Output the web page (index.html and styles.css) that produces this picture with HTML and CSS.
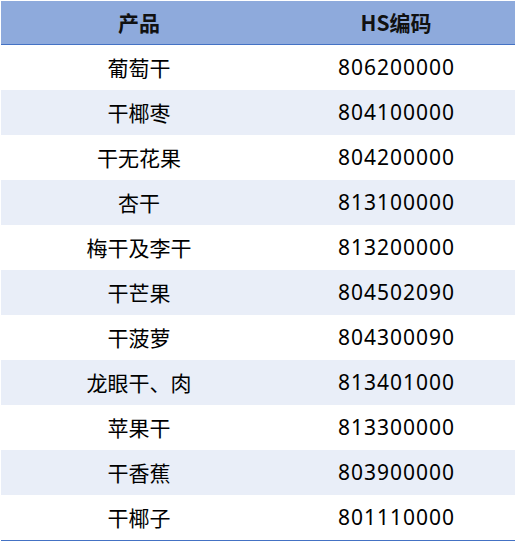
FILE: index.html
```html
<!DOCTYPE html>
<html lang="zh">
<head>
<meta charset="utf-8">
<link rel="stylesheet" href="styles.css">
</head>
<body>
<table class="hs">
  <thead>
    <tr><th class="c1">产品</th><th class="c2">HS编码</th></tr>
  </thead>
  <tbody>
    <tr><td>葡萄干</td><td class="num">806200000</td></tr>
    <tr class="alt"><td>干椰枣</td><td class="num">804100000</td></tr>
    <tr><td>干无花果</td><td class="num">804200000</td></tr>
    <tr class="alt"><td>杏干</td><td class="num">813100000</td></tr>
    <tr><td>梅干及李干</td><td class="num">813200000</td></tr>
    <tr class="alt"><td>干芒果</td><td class="num">804502090</td></tr>
    <tr><td>干菠萝</td><td class="num">804300090</td></tr>
    <tr class="alt"><td>龙眼干、肉</td><td class="num">813401000</td></tr>
    <tr><td>苹果干</td><td class="num">813300000</td></tr>
    <tr class="alt"><td>干香蕉</td><td class="num">803900000</td></tr>
    <tr><td>干椰子</td><td class="num">801110000</td></tr>
  </tbody>
</table>
</body>
</html>
```
FILE: styles.css
```css
html, body {
  margin: 0;
  padding: 0;
  background: #ffffff;
}
body {
  padding: 1px 0 0 1px;
  font-family: "Noto Sans CJK SC", "Noto Sans", sans-serif;
}
.hs {
  border-collapse: collapse;
  width: 514px;
  table-layout: fixed;
  border-bottom: 1px solid #4472c4;
}
.hs th, .hs td {
  padding: 0;
  text-align: center;
  vertical-align: middle;
  font-size: 21px;
  color: #000;
  line-height: 1;
}
.hs th {
  background: #8eaadc;
  height: 43px;
  font-weight: bold;
  color: #111;
  border-bottom: 1px solid #4472c4;
}
.hs .c1 { width: 276px; }
.hs .c2 { width: 238px; }
.hs td {
  height: 45px;
}
.hs td.num {
  font-family: "Noto Sans", "Noto Sans CJK SC", sans-serif;
  letter-spacing: 1px;
  text-indent: 1px;
}
.hs tr.alt td {
  background: #e9eef8;
}
```
